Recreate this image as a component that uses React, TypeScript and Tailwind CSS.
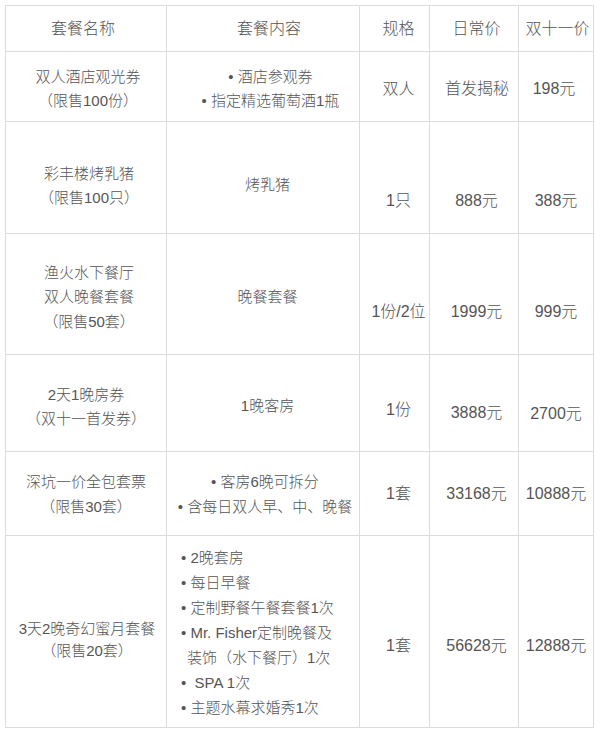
import React from "react";

const font = "font-['Liberation_Sans','Noto_Sans_CJK_SC',sans-serif]";

function Cell({ className = "", children }: { className?: string; children?: React.ReactNode }) {
  return (
    <div className={`bg-white flex flex-col items-center justify-center text-center text-[#555] font-light ${className}`}>
      {children}
    </div>
  );
}

export default function App() {
  return (
    <div className={`w-[600px] h-[734px] bg-white pl-[5px] pt-[5px] ${font}`}>
      <div className="grid w-fit grid-cols-[160px_192px_69px_88px_74px] grid-rows-[45px_69px_111px_120px_96px_83px_191px] gap-px p-px bg-[#dcdcdc]">
        {/* Header */}
        <Cell className="text-[16px] pr-[6px]">套餐名称</Cell>
        <Cell className="text-[16px] pl-[12px]">套餐内容</Cell>
        <Cell className="text-[16px] pl-[8px]">规格</Cell>
        <Cell className="text-[16px] pl-[5px]">日常价</Cell>
        <Cell className="text-[16px] pl-[3px]">双十一价</Cell>

        {/* Row 1 */}
        <Cell className="text-[15px] leading-[24px] pt-[4px] pl-[4px]">
          <div>双人酒店观光券</div>
          <div>（限售100份）</div>
        </Cell>
        <Cell className="text-[15px] leading-[24px] pt-[4px] pl-[15px]">
          <div>• 酒店参观券</div>
          <div>• 指定精选葡萄酒1瓶</div>
        </Cell>
        <Cell className="text-[16px] pt-[5px] pl-[8px]">双人</Cell>
        <Cell className="text-[16px] pt-[5px] pl-[6px]">首发揭秘</Cell>
        <Cell className="text-[16px] pt-[5px] pr-[4px]">198元</Cell>

        {/* Row 2 */}
        <Cell className="text-[15px] leading-[24px] pt-[16px] pl-[6px]">
          <div>彩丰楼烤乳猪</div>
          <div>（限售100只）</div>
        </Cell>
        <Cell className="text-[15px] pt-[16px] pl-[9px]">烤乳猪</Cell>
        <Cell className="text-[16px] pt-[46px] pl-[8px]">1只</Cell>
        <Cell className="text-[16px] pt-[46px] pl-[5px]">888元</Cell>
        <Cell className="text-[16px] pt-[46px]">388元</Cell>

        {/* Row 3 */}
        <Cell className="text-[15px] leading-[24.5px] pt-[7px] pl-[6px]">
          <div>渔火水下餐厅</div>
          <div>双人晚餐套餐</div>
          <div>（限售50套）</div>
        </Cell>
        <Cell className="text-[15px] pt-[7px] pl-[9px]">晚餐套餐</Cell>
        <Cell className="text-[16px] pt-[35px] pl-[8px]">1份/2位</Cell>
        <Cell className="text-[16px] pt-[35px] pl-[5px]">1999元</Cell>
        <Cell className="text-[16px] pt-[35px]">999元</Cell>

        {/* Row 4 */}
        <Cell className="text-[15px] leading-[24px] pt-[7px]">
          <div>2天1晚房券</div>
          <div>（双十一首发券）</div>
        </Cell>
        <Cell className="text-[15px] pt-[7px] pl-[9px]">1晚客房</Cell>
        <Cell className="text-[16px] pt-[13px] pl-[8px]">1份</Cell>
        <Cell className="text-[16px] pt-[19px] pl-[5px]">3888元</Cell>
        <Cell className="text-[16px] pt-[21px]">2700元</Cell>

        {/* Row 5 */}
        <Cell className="text-[15px] leading-[25px]">
          <div>深坑一价全包套票</div>
          <div>（限售30套）</div>
        </Cell>
        <Cell className="text-[15px] leading-[25px] pl-[4px]">
          <div>• 客房6晚可拆分</div>
          <div>• 含每日双人早、中、晚餐</div>
        </Cell>
        <Cell className="text-[16px] pl-[8px]">1套</Cell>
        <Cell className="text-[16px] pl-[5px]">33168元</Cell>
        <Cell className="text-[16px]">10888元</Cell>

        {/* Row 6 */}
        <Cell className="text-[15px] leading-[22px] pt-[16px] pl-[2px]">
          <div>3天2晚奇幻蜜月套餐</div>
          <div>（限售20套）</div>
        </Cell>
        <div className="bg-white flex flex-col justify-center text-left text-[#555] font-light text-[15px] leading-[25px] pt-[2px] pl-[14px] whitespace-pre">
          <div>• 2晚套房</div>
          <div>• 每日早餐</div>
          <div>• 定制野餐午餐套餐1次</div>
          <div>• Mr. Fisher定制晚餐及</div>
          <div className="pl-[6px]">装饰（水下餐厅）1次</div>
          <div>{"•  SPA 1次"}</div>
          <div>• 主题水幕求婚秀1次</div>
        </div>
        <Cell className="text-[16px] pt-[28px] pl-[8px]">1套</Cell>
        <Cell className="text-[16px] pt-[28px] pl-[5px]">56628元</Cell>
        <Cell className="text-[16px] pt-[28px]">12888元</Cell>
      </div>
    </div>
  );
}
